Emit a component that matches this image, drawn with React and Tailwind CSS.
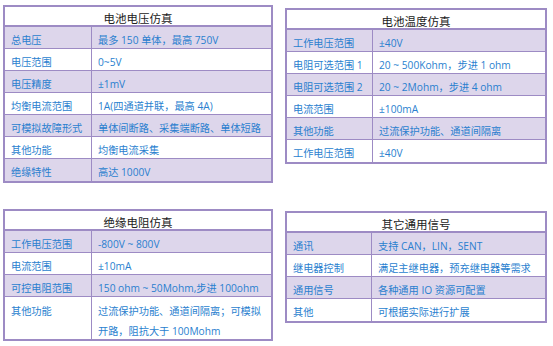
const tables = {
  voltage: {
    title: '电池电压仿真',
    col: 'grid-cols-[87px_1fr]',
    rows: [
      ['总电压', '最多 150 单体，最高 750V'],
      ['电压范围', '0~5V'],
      ['电压精度', '±1mV'],
      ['均衡电流范围', '1A(四通道并联，最高 4A)'],
      ['可模拟故障形式', '单体间断路、采集端断路、单体短路'],
      ['其他功能', '均衡电流采集'],
      ['绝缘特性', '高达 1000V'],
    ],
  },
  temp: {
    title: '电池温度仿真',
    col: 'grid-cols-[86px_1fr]',
    rows: [
      ['工作电压范围', '±40V'],
      ['电阻可选范围 1', '20 ~ 500Kohm，步进 1 ohm'],
      ['电阻可选范围 2', '20 ~ 2Mohm，步进 4 ohm'],
      ['电流范围', '±100mA'],
      ['其他功能', '过流保护功能、通道间隔离'],
      ['工作电压范围', '±40V'],
    ],
  },
  insulation: {
    title: '绝缘电阻仿真',
    col: 'grid-cols-[87px_1fr]',
    rows: [
      ['工作电压范围', '-800V ~ 800V'],
      ['电流范围', '±10mA'],
      ['可控电阻范围', '150 ohm ~ 50Mohm,步进 100ohm'],
      ['其他功能', ['过流保护功能、通道间隔离；可模拟', '开路，阻抗大于 100Mohm']],
    ],
  },
  general: {
    title: '其它通用信号',
    col: 'grid-cols-[85px_1fr]',
    rows: [
      ['通讯', '支持 CAN，LIN，SENT'],
      ['继电器控制', '满足主继电器，预充继电器等需求'],
      ['通用信号', '各种通用 IO 资源可配置'],
      ['其他', '可根据实际进行扩展'],
    ],
  },
}

function SpecTable({ data, className }) {
  return (
    <div className={`border-2 border-[#9d8bc4] ${className}`}>
      <div
        className="h-[20px] border-b-2 border-[#9d8bc4] flex items-center justify-center pt-[3px] text-[11.5px] leading-[16px] text-[#222]"
        style={{ fontFamily: '"Noto Sans CJK SC", sans-serif' }}
      >
        {data.title}
      </div>
      {data.rows.map(([label, value], i) => {
        const multi = Array.isArray(value)
        const last = i === data.rows.length - 1
        return (
          <div
            key={i}
            className={`grid ${data.col} ${i % 2 === 0 ? 'bg-[#ddd6eb]' : 'bg-white'} ${
              last ? '' : 'border-b border-[#9d8bc4]'
            } ${multi ? 'h-[42px]' : 'h-[22px]'}`}
          >
            <div
              className={`border-r border-[#9d8bc4] pl-[6px] whitespace-nowrap ${
                multi ? 'pt-[4px] leading-[20px]' : 'pt-[5px] leading-[16px]'
              }`}
            >
              {label}
            </div>
            <div
              className={`pl-[6px] whitespace-nowrap ${
                multi ? 'pt-[4px] leading-[20px]' : 'pt-[5px] leading-[16px]'
              }`}
            >
              {multi ? value.map((line, j) => <div key={j}>{line}</div>) : value}
            </div>
          </div>
        )
      })}
    </div>
  )
}

export default function App() {
  return (
    <div
      className="w-[553px] h-[346px] bg-white flex pl-[3px] text-[10.2px] text-[#2a7fcf] overflow-hidden"
      style={{ fontFamily: '"Open Sans", "Noto Sans CJK SC", sans-serif' }}
    >
      <div className="w-[270px] flex flex-col">
        <SpecTable data={tables.voltage} className="mt-[5px]" />
        <SpecTable data={tables.insulation} className="mt-[26px]" />
      </div>
      <div className="w-[262px] ml-[12px] flex flex-col">
        <SpecTable data={tables.temp} className="mt-[8px]" />
        <SpecTable data={tables.general} className="mt-[47px]" />
      </div>
    </div>
  )
}
